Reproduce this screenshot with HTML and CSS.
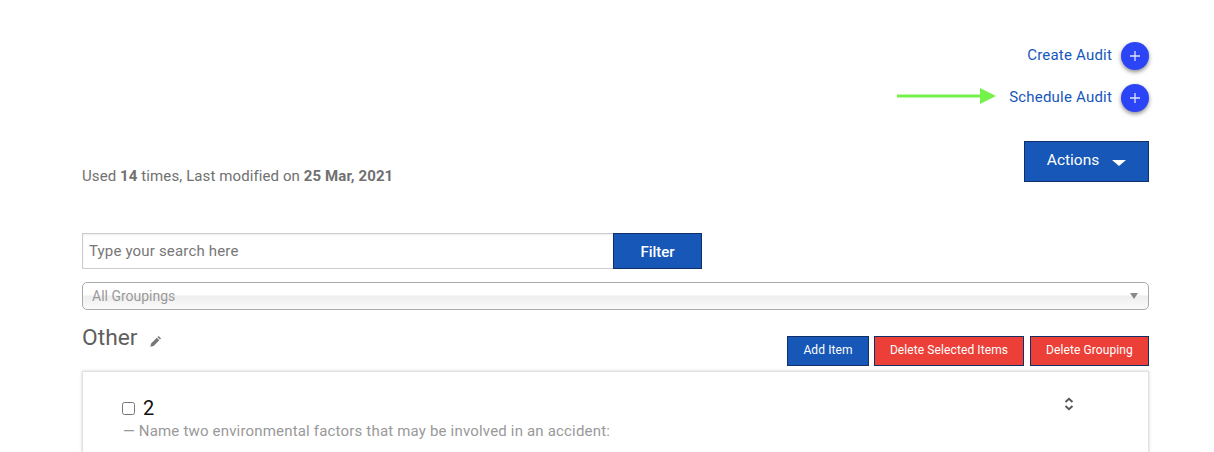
FILE: index.html
```html
<!DOCTYPE html>
<html lang="en">
<head>
<meta charset="utf-8">
<title>Audit Template</title>
<link rel="stylesheet" href="styles.css">
</head>
<body>
<main class="page">
  <section class="audit-links">
    <div class="audit-row">
      <a class="audit-link" href="#">Create Audit</a>
      <span class="fab"><svg viewBox="0 0 12 12" width="12" height="12"><path d="M6 1v10M1 6h10" stroke="#dfe4ff" stroke-width="1.3" fill="none"/></svg></span>
    </div>
    <div class="audit-row">
      <svg class="arrow" viewBox="0 0 100 18" width="100" height="18"><path d="M0 7.500h84v3H0z" fill="#74f24a"/><path d="M83 1L99 9 83 17z" fill="#74f24a"/></svg>
      <a class="audit-link" href="#">Schedule Audit</a>
      <span class="fab"><svg viewBox="0 0 12 12" width="12" height="12"><path d="M6 1v10M1 6h10" stroke="#dfe4ff" stroke-width="1.3" fill="none"/></svg></span>
    </div>
  </section>

  <section class="meta-row">
    <p class="meta">Used <b>14</b> times, Last modified on <b>25 Mar, 2021</b></p>
    <button class="btn actions" type="button">Actions <span class="caret"></span></button>
  </section>

  <form class="search">
    <input class="search-input" type="text" placeholder="Type your search here">
    <button class="btn filter" type="button">Filter</button>
  </form>

  <div class="select"><span>All Groupings</span><span class="select-arrow"></span></div>

  <section class="group-head">
    <h2 class="group-title">Other
      <svg class="pencil" viewBox="0 0 12 12" width="12" height="12"><path d="M8.600.9l2.500 2.500-1.200 1.200-2.500-2.500zM6.800 2.700l2.500 2.500-5.700 5.700-3.300.8.800-3.300z" fill="#777"/></svg>
    </h2>
    <div class="group-actions">
      <button class="btn small add" type="button">Add Item</button>
      <button class="btn small danger del-items" type="button">Delete Selected Items</button>
      <button class="btn small danger del-group" type="button">Delete Grouping</button>
    </div>
  </section>

  <section class="card">
    <div class="card-main">
      <label class="item-title"><input class="check" type="checkbox"><span>2</span></label>
      <p class="item-desc">— Name two environmental factors that may be involved in an accident:</p>
    </div>
    <svg class="sort" viewBox="0 0 10 14" width="10" height="14"><path d="M1.500 5L5 1.800 8.500 5M1.500 9L5 12.200 8.500 9" stroke="#555" stroke-width="1.800" fill="none"/></svg>
  </section>
</main>
</body>
</html>
```

FILE: styles.css
```css
* { box-sizing: border-box; }
html, body { margin: 0; height: 452px; overflow: hidden; background: #fff; }
body { font-family: Roboto, "Liberation Sans", sans-serif; color: #666; }
.page { padding: 42px 65px 0 82px; }

.audit-links { display: flex; flex-direction: column; gap: 14px; }
.audit-row { display: flex; justify-content: flex-end; align-items: center; height: 28px; position: relative; }
.audit-link { color: #1657bc; font-size: 15px; text-decoration: none; margin-right: 9px; letter-spacing: .2px; position: relative; top: -1px; }
.fab { width: 28px; height: 28px; border-radius: 50%; background: #2b44f5; display: flex; align-items: center; justify-content: center; box-shadow: 0 2px 4px rgba(0,0,0,.45); }
.arrow { position: absolute; left: 815px; top: 3px; }

.btn { font-family: Roboto, "Liberation Sans", sans-serif; color: #fff; background: #1657b8; border: 1px solid #0f2f66; padding: 0; cursor: pointer; }
.meta-row { display: flex; justify-content: space-between; align-items: flex-start; margin-top: 29px; height: 41px; }
.meta { margin: 26px 0 0; font-size: 15px; line-height: 18px; color: #707070; letter-spacing: .1px; }
.meta b { font-weight: 700; }
.actions { width: 125px; height: 41px; font-size: 15.500px; font-weight: 400; display: flex; align-items: center; justify-content: center; gap: 13px; padding-bottom: 3px; }
.caret { width: 0; height: 0; border-left: 7px solid transparent; border-right: 7px solid transparent; border-top: 6px solid #fff; margin-top: 5px; }

.search { display: flex; margin-top: 51px; width: 620px; height: 36px; }
.search-input { width: 531px; height: 36px; border: 1px solid #ccc; border-right: 0; padding: 0 6px; font: 15px Roboto, "Liberation Sans", sans-serif; letter-spacing: .17px; color: #666; outline: none; box-shadow: inset 0 1px 2px rgba(0,0,0,.08); }
.search-input::placeholder { color: #777; opacity: 1; }
.filter { width: 89px; height: 36px; font-size: 15px; font-weight: 500; padding-top: 2px; }

.select { display: flex; justify-content: space-between; align-items: center; height: 28px; margin-top: 13px; padding: 0 10px 0 9px; border: 1px solid #aaa; border-radius: 5px; font-size: 14px; color: #9a9a9a; background: linear-gradient(#fff 0, #fff 45%, #eeeeee 50%, #fafafa 100%); }
.select-arrow { width: 0; height: 0; border-left: 4px solid transparent; border-right: 4px solid transparent; border-top: 6px solid #888; margin-top: -1px; }

.group-head { display: flex; justify-content: space-between; align-items: flex-start; margin-top: 13px; }
.group-title { margin: 1px 0 0; font-size: 22.800px; line-height: 28px; font-weight: 400; color: #5f5f5f; display: flex; align-items: center; gap: 12px; }
.pencil { margin-top: 5px; }
.group-actions { display: flex; gap: 6px; margin-top: 13px; }
.small { height: 30px; font-size: 12px; font-weight: 400; letter-spacing: .1px; padding-bottom: 2px; }
.add { width: 82px; margin-right: -1px; }
.danger { background: #ec3f38; color: #fff; }
.del-items { width: 150px; }
.del-group { width: 119px; }

.card { display: flex; justify-content: space-between; align-items: flex-start; margin-top: 5px; height: 120px; padding: 21px 74px 0 39px; border: 1px solid #e2e2e2; box-shadow: 0 0 3px rgba(0,0,0,.18); }
.item-title { display: flex; align-items: center; gap: 8px; font-size: 20px; line-height: 30px; color: #111; }
.check { width: 13px; height: 13px; margin: 0; }
.item-desc { margin: -1px 0 0 1px; font-size: 15px; line-height: 18px; color: #999; letter-spacing: .18px; }
.sort { margin-top: 4px; }
```
